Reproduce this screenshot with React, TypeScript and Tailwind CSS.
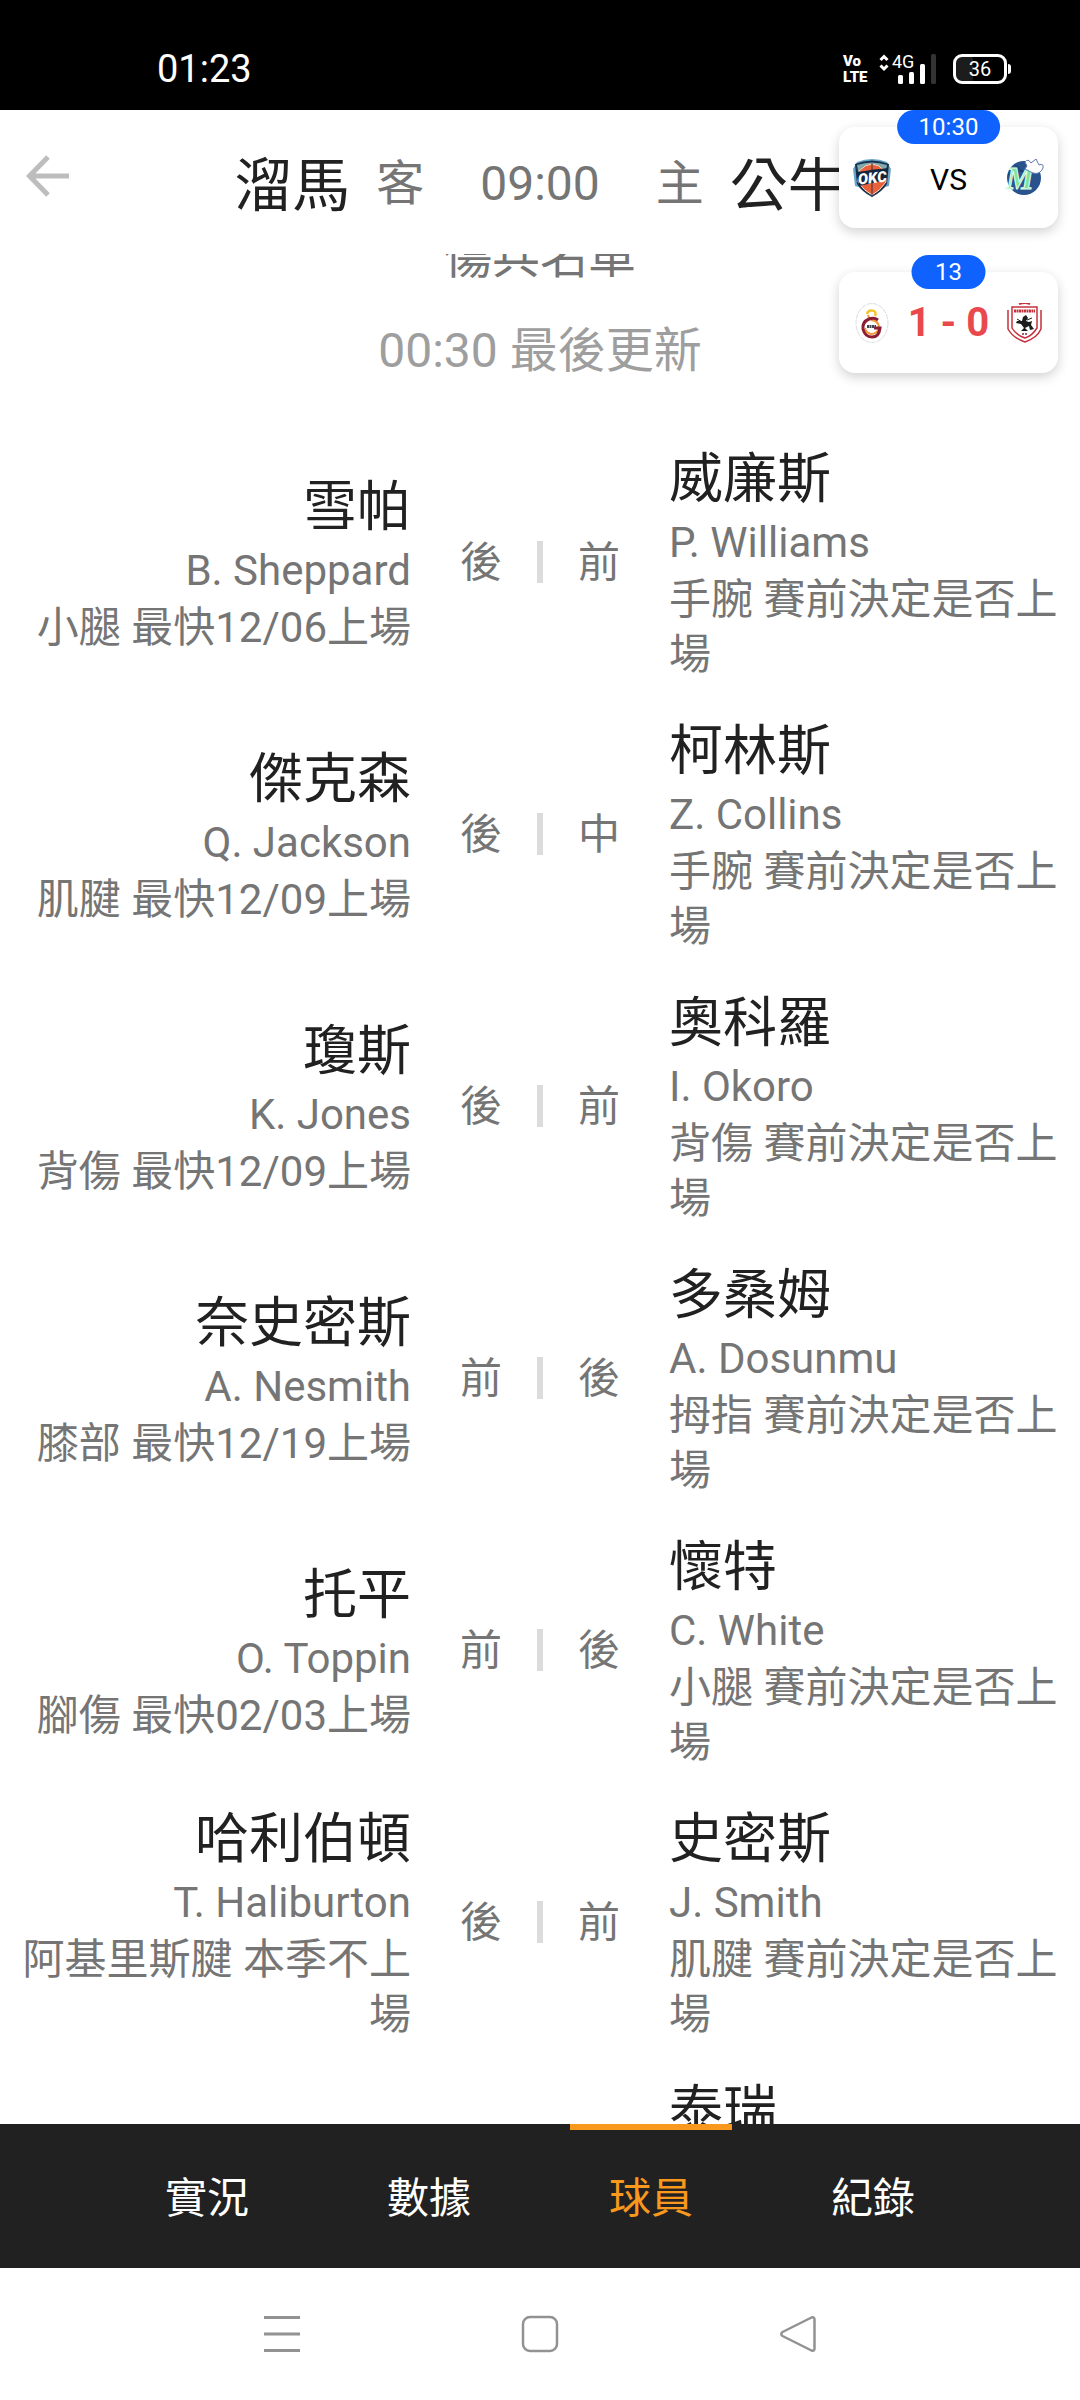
import { clsx } from "clsx";

type Player = {
  name: string;
  english?: string;
  position?: string;
  note?: string;
};

const injuries: { away?: Player; home: Player }[] = [
  {
    away: { name: "雪帕", english: "B. Sheppard", position: "後", note: "小腿 最快12/06上場" },
    home: { name: "威廉斯", english: "P. Williams", position: "前", note: "手腕 賽前決定是否上場" },
  },
  {
    away: { name: "傑克森", english: "Q. Jackson", position: "後", note: "肌腱 最快12/09上場" },
    home: { name: "柯林斯", english: "Z. Collins", position: "中", note: "手腕 賽前決定是否上場" },
  },
  {
    away: { name: "瓊斯", english: "K. Jones", position: "後", note: "背傷 最快12/09上場" },
    home: { name: "奧科羅", english: "I. Okoro", position: "前", note: "背傷 賽前決定是否上場" },
  },
  {
    away: { name: "奈史密斯", english: "A. Nesmith", position: "前", note: "膝部 最快12/19上場" },
    home: { name: "多桑姆", english: "A. Dosunmu", position: "後", note: "拇指 賽前決定是否上場" },
  },
  {
    away: { name: "托平", english: "O. Toppin", position: "前", note: "腳傷 最快02/03上場" },
    home: { name: "懷特", english: "C. White", position: "後", note: "小腿 賽前決定是否上場" },
  },
  {
    away: { name: "哈利伯頓", english: "T. Haliburton", position: "後", note: "阿基里斯腱 本季不上場" },
    home: { name: "史密斯", english: "J. Smith", position: "前", note: "肌腱 賽前決定是否上場" },
  },
  { home: { name: "泰瑞" } },
];

const tabs = ["實況", "數據", "球員", "紀錄"];

function StatusBar() {
  return (
    <div className="flex h-[110px] shrink-0 items-center justify-between bg-black pt-7 pr-[69px] pl-[157px] text-white">
      <span className="text-[38px] leading-10">01:23</span>
      <div className="flex items-center">
        <div className="w-[36px] text-[15px] leading-[16px] font-black">
          <p>Vo</p>
          <p>LTE</p>
        </div>
        <svg width="58" height="32" viewBox="0 0 58 32" className="mr-[16px] overflow-visible">
          <path d="M1.5 7 5 3.5 8.5 7M1.5 12.5 5 16 8.5 12.5" fill="none" stroke="#fff" strokeWidth="3" />
          <text x="13" y="15" fill="#fff" fontSize="18">
            4G
          </text>
          <rect x="19" y="22" width="5" height="9" rx="1.5" fill="#fff" />
          <rect x="30" y="19" width="5" height="12" rx="1.5" fill="#fff" />
          <rect x="41" y="11" width="5" height="20" rx="1.5" fill="#fff" />
          <rect x="52" y="1" width="5" height="30" rx="1.5" fill="#333" />
        </svg>
        <div className="flex items-center gap-px">
          <div className="flex h-[30px] w-[54px] items-center justify-center rounded-[9px] border-3 border-white bg-linear-to-r from-[#1c1c1c] from-36% to-black to-36% text-[20px] leading-6">
            36
          </div>
          <div className="h-[10px] w-[3px] rounded-r bg-white" />
        </div>
      </div>
    </div>
  );
}

function Header() {
  return (
    <header className="grid h-[144px] shrink-0 grid-cols-[96px_1fr_96px] items-center">
      <button aria-label="返回" className="flex h-[132px] items-center justify-center self-start">
        <svg width="44" height="42" viewBox="0 0 44 42" fill="none" stroke="#bdbdbd" strokeWidth="5">
          <path d="M43 21H4M22 2 3.5 21 22 40" />
        </svg>
      </button>
      <h1 className="flex items-center justify-center pt-1 whitespace-nowrap text-[48px] leading-[72px] text-[#757575]">
        <span className="mr-[26px] pt-1 text-[58px] text-[#212121]">溜馬</span>
        <span>客</span>
        <span className="mx-[56px]">09:00</span>
        <span>主</span>
        <span className="ml-[26px] pt-1 text-[58px] text-[#212121]">公牛</span>
      </h1>
    </header>
  );
}

function PlayerCell({ player, away }: { player?: Player; away?: boolean }) {
  if (!player) return <div />;
  return (
    <div className={clsx("text-[42px] leading-[55px] text-[#757575]", away ? "pl-2 text-right" : "pr-2")}>
      <h3 className="pt-1 text-[54px] leading-[68px] text-[#212121]">{player.name}</h3>
      <p className="leading-[57px]">{player.english}</p>
      <p className="pt-px">{player.note}</p>
    </div>
  );
}

function InjuryList() {
  return (
    <main className="min-h-0 flex-1 overflow-y-auto [scrollbar-width:none]">
      <div className="-mt-8 text-center text-[48px] leading-[70px]">
        <h2 className="text-[#757575]">傷兵名單</h2>
        <p className="mt-6 text-[#9e9e9e]">00:30 最後更新</p>
      </div>
      <ul className="mt-14 flex flex-col gap-8">
        {injuries.map(({ away, home }) => (
          <li key={home.name} className="grid grid-cols-[1fr_258px_1fr] items-center">
            <PlayerCell player={away} away />
            <div className="flex items-center justify-center text-[42px] leading-[55px] text-[#757575]">
              {home.position && (
                <>
                  <span>{away?.position}</span>
                  <span className="mx-[35px] h-[42px] w-[6px] bg-[#dcdcdc]" />
                  <span>{home.position}</span>
                </>
              )}
            </div>
            <PlayerCell player={home} />
          </li>
        ))}
      </ul>
    </main>
  );
}

function TabBar() {
  return (
    <nav className="flex h-[144px] shrink-0 justify-center gap-[60px] bg-[#212121]">
      {tabs.map((tab) => (
        <button
          key={tab}
          className={clsx(
            "w-[162px] border-t-6 pb-[2px] text-[42px] leading-[55px]",
            tab === "球員" ? "border-[#f8981d] text-[#f8981d]" : "border-transparent text-white",
          )}
        >
          {tab}
        </button>
      ))}
    </nav>
  );
}

function SystemNav() {
  return (
    <div className="grid h-[132px] shrink-0 grid-cols-[1fr_258px_258px_258px_1fr] items-center justify-items-center bg-white">
      <button aria-label="最近使用" className="col-start-2">
        <svg width="40" height="40" viewBox="0 0 40 40" stroke="#929292" strokeWidth="3">
          <path d="M2 3.5H38M2 20H38M2 36.5H38" />
        </svg>
      </button>
      <button aria-label="主畫面">
        <svg width="40" height="40" viewBox="0 0 40 40" fill="none" stroke="#929292" strokeWidth="2.5">
          <rect x="3" y="3" width="34" height="34" rx="7" />
        </svg>
      </button>
      <button aria-label="上一頁">
        <svg width="40" height="40" viewBox="0 0 40 40" fill="none" stroke="#929292" strokeWidth="2.5" strokeLinejoin="round">
          <path d="M33.5 3.5 4.5 18Q2 20 4.5 22L33.5 36.5Q36.5 37.5 36.5 34.5V5.5Q36.5 2.5 33.5 3.5Z" />
        </svg>
      </button>
    </div>
  );
}

function ThunderLogo() {
  return (
    <svg width="40" height="40" viewBox="0 0 40 40">
      <path d="M5 4Q20-2 35 4L39 11 37 28 30 30 20 39 10 30 3 28 1 11Z" fill="#6ba6c9" />
      <path d="M3 6Q20-1 37 6L35 26Q30 34 20 39 10 34 5 26Z" fill="#17304d" />
      <path d="M5 7Q20 2 35 7L34 13H6Z" fill="#80a9ad" />
      <path d="M7 13Q20-1 33 13L34 24Q28 33 20 37 12 33 6 24Z" fill="#e8613b" stroke="#f6d9c6" />
      <path d="M20 5V37M9 17Q20 9 31 13" stroke="#48303a" strokeWidth="1" fill="none" />
      <path d="M5 14 36 10 34 22 7 28Z" fill="#15273d" />
      <text x="6" y="25" fontSize="15" fontWeight="900" fontStyle="italic" fill="#fff" transform="rotate(-6 20 20)">
        OKC
      </text>
    </svg>
  );
}

function MavericksLogo() {
  return (
    <svg width="40" height="40" viewBox="0 0 40 40">
      <circle cx="19" cy="20" r="17" fill="#28538d" />
      <path d="M3 17Q12 10 24 15M10 7 24 19" stroke="#183865" fill="none" />
      <text x="1" y="31" fontSize="31" fontWeight="700" fontStyle="italic" fill="#7de39b" stroke="#e5fff0" strokeWidth="1" className="font-[Liberation_Serif]">
        M
      </text>
      <path d="M20 4Q23 0 26 5L31 1 34 7Q39 5 38 10 35 17 28 15L20 11 22 8Z" fill="#fff" stroke="#6279ac" strokeWidth="1" />
    </svg>
  );
}

function GalatasarayLogo() {
  return (
    <svg width="40" height="40" viewBox="0 0 40 40" fill="none">
      <ellipse cx="20" cy="20" rx="16" ry="19.5" stroke="#d9dde0" strokeWidth="1" strokeDasharray="5 1" />
      <path d="M15 11Q16 7 20 7.5 25 8 23 13" stroke="#f3c62f" strokeWidth="2.5" />
      <path d="M16 12Q17 17 23 18 27 20 27 25 25 31 19 31 14 30 13 25" stroke="#f09a35" strokeWidth="2" />
      <path d="M26 17Q22 14 17 16 10 19 11 26 13 34 20 34 27 34 28 25H22" stroke="#8c1c32" strokeWidth="3" />
      <path d="M15 23.5H24" stroke="#424651" strokeWidth="3" strokeDasharray="2 .5" />
    </svg>
  );
}

function SamsunsporLogo() {
  return (
    <svg width="40" height="40" viewBox="0 0 40 40" fill="none">
      <path d="M3 7V26Q8 35 20 39 32 35 36 26V7" stroke="#c5323c" strokeWidth="1.5" />
      <path d="M14 1Q20-1 25 1" stroke="#c5323c" strokeWidth="2" />
      <path d="M7 4H32V25Q27 33 20 35 11 32 7 25Z" stroke="#c5323c" strokeWidth="1.5" />
      <path d="M9 8H30" stroke="#c5323c" strokeWidth="3" strokeDasharray="2 .5" />
      <path d="M18 14 21 12 23 15 21 18 24 19 27 18 26 22 29 26 25 27 24 23 20 25 23 28H16L19 25 16 21 11 20 12 18 17 18Z" fill="#1c1c1c" />
      <path d="M12 16 17 19M22 17 27 15" stroke="#1c1c1c" strokeWidth="1" />
      <path d="M17 31H23" stroke="#6b3438" strokeWidth="1.5" strokeDasharray="2 1" />
    </svg>
  );
}

function FloatingScores() {
  return (
    <aside className="absolute top-[127px] right-[22px] flex flex-col gap-[44px]">
      <div className="relative flex h-[101px] w-[219px] items-center justify-between rounded-2xl bg-white px-[13px] shadow-[0_4px_12px_rgba(0,0,0,0.18)]">
        <span className="absolute -top-[17px] left-1/2 -translate-x-1/2 rounded-full bg-[#0f62fe] px-[22px] text-[24px] leading-[34px] text-white">
          10:30
        </span>
        <ThunderLogo />
        <span className="pt-1 text-[30px] leading-10 text-black">VS</span>
        <MavericksLogo />
      </div>
      <div className="relative flex h-[101px] w-[219px] items-center justify-between rounded-2xl bg-white px-[13px] shadow-[0_4px_12px_rgba(0,0,0,0.18)]">
        <span className="absolute -top-[17px] left-1/2 -translate-x-1/2 rounded-full bg-[#0f62fe] px-[24px] text-[24px] leading-[34px] text-white">
          13
        </span>
        <GalatasarayLogo />
        <span className="text-[40px] leading-10 font-bold text-[#e9484d]">1 - 0</span>
        <SamsunsporLogo />
      </div>
    </aside>
  );
}

function App() {
  return (
    <div className="relative flex h-screen flex-col overflow-hidden bg-white font-[Roboto,'Noto_Sans_CJK_TC',sans-serif]">
      <StatusBar />
      <Header />
      <InjuryList />
      <TabBar />
      <SystemNav />
      <FloatingScores />
    </div>
  );
}

export default App;
